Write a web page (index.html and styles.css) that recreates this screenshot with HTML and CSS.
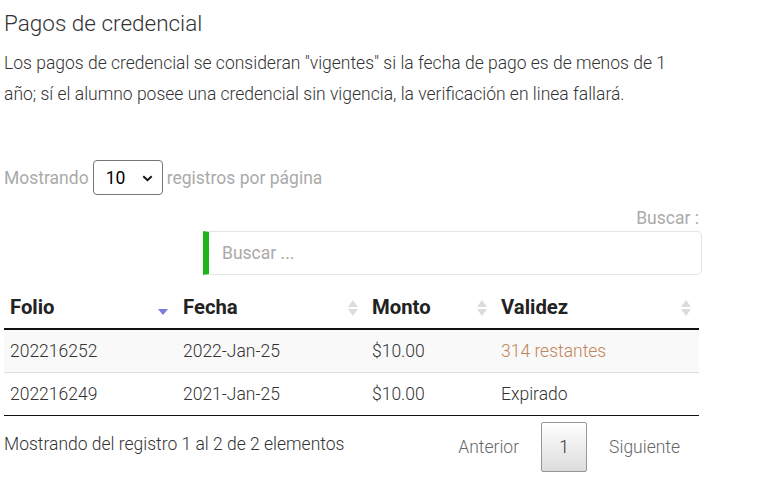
FILE: index.html
```html
<!DOCTYPE html>
<html lang="es">
<head>
<meta charset="utf-8">
<title>Pagos de credencial</title>
<link rel="stylesheet" href="styles.css">
</head>
<body>
<div class="page">
  <h2 class="title">Pagos de credencial</h2>
  <p class="intro">Los pagos de credencial se consideran "vigentes" si la fecha de pago es de menos de 1 año; sí el alumno posee una credencial sin vigencia, la verificación en linea fallará.</p>

  <div class="length">
    <span>Mostrando</span>
    <span class="select">10
      <svg class="chev" width="11" height="7" viewBox="0 0 11 7"><path d="M1.3 1.3 L5.5 5.3 L9.7 1.3" fill="none" stroke="#111" stroke-width="1.9"/></svg>
    </span>
    <span>registros por página</span>
  </div>

  <div class="filter">
    <div class="filter-label">Buscar :</div>
    <div class="search">Buscar ...</div>
  </div>

  <table class="grid">
    <colgroup>
      <col class="c1"><col class="c2"><col class="c3"><col class="c4">
    </colgroup>
    <thead>
      <tr>
        <th><div class="th">Folio<span class="sort-desc"></span></div></th>
        <th><div class="th">Fecha<span class="sort-both"><i class="up"></i><i class="down"></i></span></div></th>
        <th><div class="th">Monto<span class="sort-both"><i class="up"></i><i class="down"></i></span></div></th>
        <th><div class="th">Validez<span class="sort-both"><i class="up"></i><i class="down"></i></span></div></th>
      </tr>
    </thead>
    <tbody>
      <tr class="odd">
        <td>202216252</td><td>2022-Jan-25</td><td>$10.00</td><td class="valid">314 restantes</td>
      </tr>
      <tr>
        <td>202216249</td><td>2021-Jan-25</td><td>$10.00</td><td>Expirado</td>
      </tr>
    </tbody>
  </table>

  <div class="footer">
    <div class="info">Mostrando del registro 1 al 2 de 2 elementos</div>
    <div class="paging">
      <span class="pbtn">Anterior</span>
      <span class="pcur">1</span>
      <span class="pbtn">Siguiente</span>
    </div>
  </div>
</div>
</body>
</html>
```

FILE: styles.css
```css
* { box-sizing: border-box; }
html, body { margin: 0; padding: 0; background: #fff; }
body {
  font-family: Roboto, "Liberation Sans", sans-serif;
  color: #333;
  font-size: 17.5px;
}
.page {
  padding: 0 0 0 4px;
  width: 702px;
}
.title {
  margin: 0;
  padding-top: 8px;
  font-size: 22.5px;
  font-weight: 300;
  line-height: 30px;
  color: #333;
}
.intro {
  margin: 10px 0 0;
  font-weight: 300;
  font-size: 17.5px;
  line-height: 31px;
  width: 685px;
  color: #333;
}
.length {
  margin-top: 50px;
  display: flex;
  align-items: center;
  gap: 4px;
  color: #aaa;
  font-size: 17.5px;
  height: 35px;
}
.select {
  width: 70px;
  height: 35px;
  border: 1px solid #767676;
  border-radius: 4px;
  display: flex;
  align-items: center;
  padding-left: 12px;
  color: #000;
  font-size: 17.5px;
  position: relative;
}
.chev {
  position: absolute;
  right: 9px;
  top: 14px;
}
.filter {
  margin-top: 13px;
  display: flex;
  flex-direction: column;
  align-items: flex-end;
}
.filter-label {
  color: #aaa;
  font-size: 17.5px;
  line-height: 20px;
  padding-right: 3px;
}
.search {
  margin-top: 3px;
  width: 499px;
  height: 44px;
  border: 1px solid #e5e5e5;
  border-left: 6px solid #1cb51c;
  border-radius: 0 5px 5px 0;
  color: #aaa;
  font-size: 17.5px;
  display: flex;
  align-items: center;
  padding-left: 13px;
}
.grid {
  margin-top: 11px;
  width: 695px;
  border-collapse: collapse;
  table-layout: fixed;
}
.c1 { width: 173px; }
.c2 { width: 189px; }
.c3 { width: 129px; }
.c4 { width: 204px; }
.grid th {
  padding: 0;
  text-align: left;
  border-bottom: 2px solid #111;
  font-weight: 700;
  font-size: 20.3px;
  color: #222;
  height: 43px;
}
.th {
  display: flex;
  align-items: center;
  justify-content: space-between;
  padding: 0 8px 0 6px;
}
.sort-desc {
  width: 0; height: 0;
  border-left: 5.5px solid transparent;
  border-right: 5.5px solid transparent;
  border-top: 6px solid #7b7bdf;
  margin-top: 10px;
  margin-right: 1px;
}
.sort-both {
  display: flex;
  flex-direction: column;
  gap: 2px;
  margin-top: 2px;
}
.sort-both i {
  display: block;
  width: 0; height: 0;
  border-left: 5px solid transparent;
  border-right: 5px solid transparent;
}
.sort-both .up { border-bottom: 7px solid #dcdcdc; }
.sort-both .down { border-top: 7px solid #dcdcdc; }
.grid td {
  padding: 0 6px;
  height: 43px;
  font-weight: 300;
  font-size: 17.5px;
  color: #333;
  border-top: 1px solid #ddd;
}
.grid tbody tr:first-child td { border-top: none; }
.grid tbody tr:last-child td { border-bottom: 1px solid #111; }
.grid tr.odd td { background: #f9f9f9; }
.grid td.valid { color: #c0845a; }
.footer {
  display: flex;
  justify-content: space-between;
  align-items: center;
  margin-top: 6px;
  width: 695px;
}
.info {
  font-weight: 300;
  font-size: 17.5px;
  color: #333;
  padding-bottom: 5px;
}
.paging {
  display: flex;
  align-items: center;
  gap: 22px;
  margin-right: 19px;
}
.pbtn {
  font-weight: 300;
  font-size: 17.5px;
  color: #666;
}
.pcur {
  width: 46px;
  height: 50px;
  border: 1px solid #979797;
  border-radius: 2px;
  background: linear-gradient(to bottom, #fff 0%, #dcdcdc 100%);
  display: flex;
  align-items: center;
  justify-content: center;
  font-weight: 300;
  font-size: 17.5px;
  color: #333;
}
```
